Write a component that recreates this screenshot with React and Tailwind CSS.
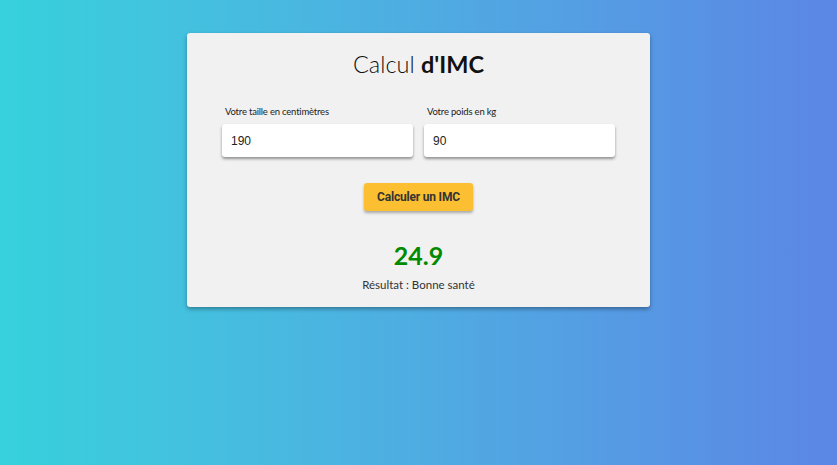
export default function App() {
  return (
    <div className="w-[837px] h-[465px] bg-gradient-to-r from-[#36d1dc] to-[#5b86e5] flex justify-center pt-[33px]" style={{ fontFamily: "Lato, sans-serif" }}>
      <div className="w-[463px] h-[274px] bg-[#f1f1f1] rounded-[3px] shadow-[0_2px_4px_rgba(0,0,0,0.35)] px-[35px] flex flex-col items-center">
        <h1 className="mt-[15px] text-[23.5px] leading-[32px] text-[#111] font-light">
          Calcul <span className="font-bold">d'IMC</span>
        </h1>
        <div className="w-full mt-[26px] grid grid-cols-2 gap-[11px]">
          <div className="flex flex-col">
            <label className="text-[9.5px] leading-[12px] text-[#222] pl-[3px] tracking-[-0.2px]">Votre taille en centimètres</label>
            <div className="mt-[6px] h-[33px] bg-white rounded-[3px] shadow-[0_2px_3px_rgba(0,0,0,0.4)] flex items-center pl-[9px] text-[12px] text-[#222]" style={{ fontFamily: "'Liberation Sans', Arial, sans-serif" }}>190</div>
          </div>
          <div className="flex flex-col">
            <label className="text-[9.5px] leading-[12px] text-[#222] pl-[3px] tracking-[-0.2px]">Votre poids en kg</label>
            <div className="mt-[6px] h-[33px] bg-white rounded-[3px] shadow-[0_2px_3px_rgba(0,0,0,0.4)] flex items-center pl-[9px] text-[12px] text-[#222]" style={{ fontFamily: "'Liberation Sans', Arial, sans-serif" }}>90</div>
          </div>
        </div>
        <button className="mt-[26px] w-[109px] h-[28px] bg-[#fbbf31] rounded-[3px] shadow-[0_2px_3px_rgba(0,0,0,0.3)] text-[12px] font-bold text-[#333] tracking-[-0.2px]" style={{ fontFamily: "Roboto, 'Liberation Sans', sans-serif" }}>Calculer un IMC</button>
        <div className="mt-[28px] text-[25px] leading-[32px] font-bold text-[#008a00]">24.9</div>
        <div className="mt-[6px] text-[11.5px] leading-[16px] text-[#333]">Résultat : Bonne santé</div>
      </div>
    </div>
  );
}
